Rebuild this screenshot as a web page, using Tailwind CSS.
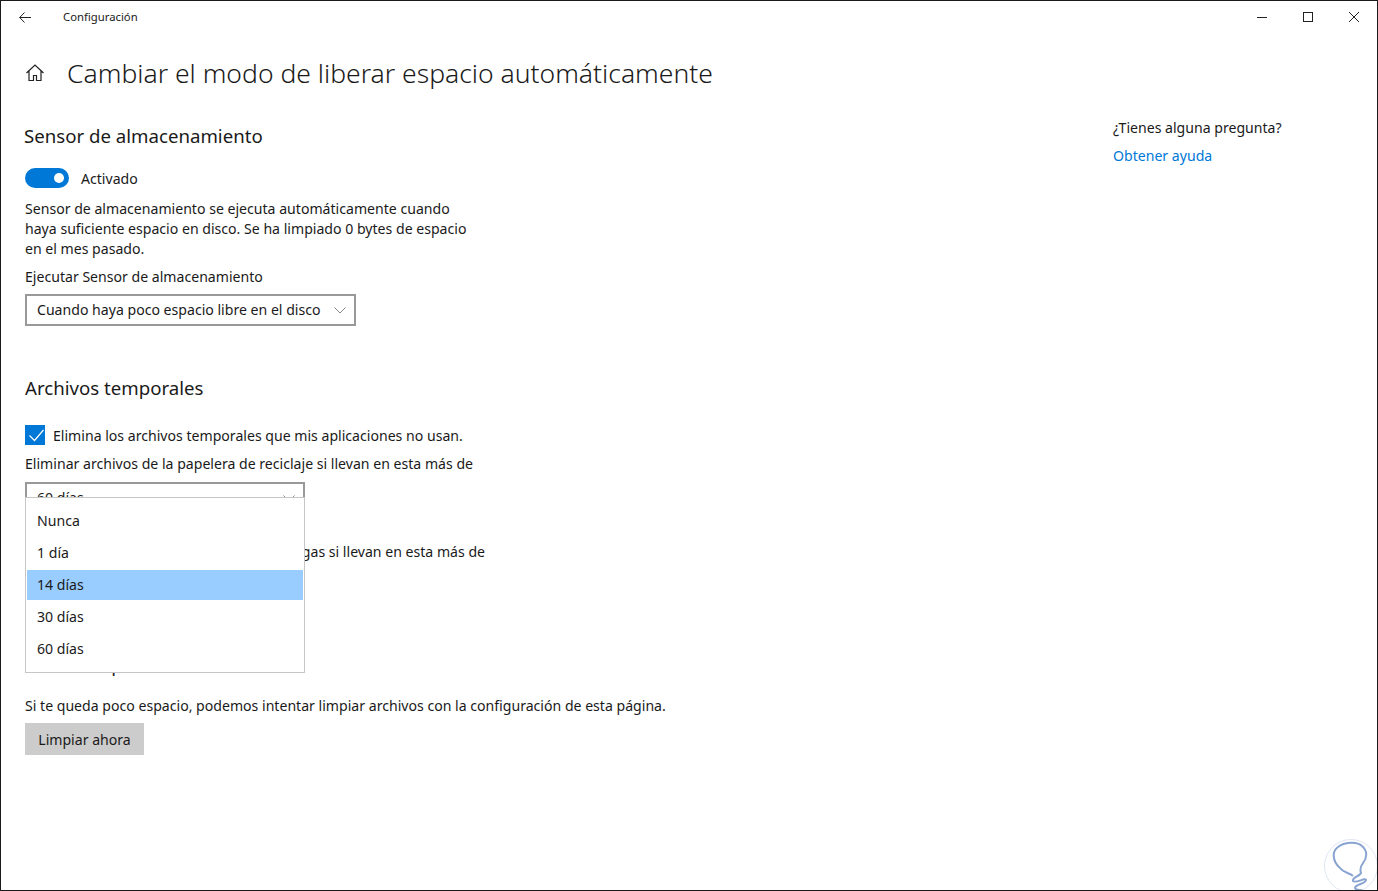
<!DOCTYPE html>
<html lang="es">

<head>
  <meta charset="UTF-8">
  <script src="https://cdn.jsdelivr.net/npm/@tailwindcss/browser@4"></script>
  <title>Configuración</title>
</head>

<body class="bg-white">
  <div class="relative w-[1378px] h-[891px] overflow-hidden border border-[#1a1a1a] bg-white text-[#1a1a1a] font-['Noto_Sans','Open_Sans',sans-serif] text-[14.1px]">

    <!-- title bar -->
    <div class="flex items-center h-[32px] pl-[18px]">
      <svg class="w-[12px] h-[11px]" viewBox="0 0 12 11" fill="none" stroke="#222" stroke-width="1"><path d="M12 5.500H.7M5.500.5 .7 5.500l4.800 5" /></svg>
      <span class="ml-[32px] text-[11.300px]">Configuración</span>
      <div class="ml-auto flex items-center pr-[18px] gap-[36px]">
        <svg class="w-[10px] h-[10px]" viewBox="0 0 10 10" stroke="#222"><path d="M0 5.500H10" /></svg>
        <svg class="w-[10px] h-[10px]" viewBox="0 0 10 10" fill="none" stroke="#222"><rect x=".5" y=".5" width="9" height="9" /></svg>
        <svg class="w-[10px] h-[10px]" viewBox="0 0 10 10" stroke="#222"><path d="M0 0l10 10M10 0 0 10" /></svg>
      </div>
    </div>

    <div class="flex justify-between">
      <main class="pl-[24px]">
        <div class="flex items-center h-[46px] mt-[17px]">
          <svg class="w-[20px] h-[20px]" viewBox="0 0 20 20" fill="none" stroke="#222" stroke-width="1.2"><path d="M1.500 10 10 2l8.500 8M4 8v9.500h4.500v-5h3v5H16V8" /></svg>
          <h1 class="ml-[22px] text-[26.500px] leading-[36px] font-light">Cambiar el modo de liberar espacio automáticamente</h1>
        </div>

        <h2 class="mt-[26px] text-[18.650px] leading-[28px] -ml-[1px]">Sensor de almacenamiento</h2>

        <div class="flex items-center mt-[18px] h-[20px]">
          <div class="flex items-center justify-end w-[44px] h-[20px] rounded-full bg-[#0078d7] pr-[5px]">
            <div class="w-[10px] h-[10px] rounded-full bg-white"></div>
          </div>
          <span class="ml-[12px] pt-[2px]">Activado</span>
        </div>

        <p class="mt-[11px] w-[450px] leading-[20px]">Sensor de almacenamiento se ejecuta automáticamente cuando haya suficiente espacio en disco. Se ha limpiado 0 bytes de espacio en el mes pasado.</p>

        <p class="mt-[8px] leading-[20px]">Ejecutar Sensor de almacenamiento</p>
        <div class="flex items-center justify-between mt-[7px] w-[331px] h-[32px] border-2 border-[#999] pl-[10px] pr-[8px]">
          <span>Cuando haya poco espacio libre en el disco</span>
          <svg class="w-[12px] h-[7px]" viewBox="0 0 12 7" fill="none" stroke="#888"><path d="M.5.5 6 6l5.500-5.500" /></svg>
        </div>

        <h2 class="mt-[48px] text-[18.650px] leading-[28px]">Archivos temporales</h2>

        <div class="flex items-center mt-[23px] h-[20px]">
          <div class="w-[20px] h-[20px] bg-[#0078d7]">
            <svg class="w-[20px] h-[20px]" viewBox="0 0 20 20" fill="none" stroke="#fff" stroke-width="1.200"><path d="M4.500 10.500l5 5 9-10.500" /></svg>
          </div>
          <span class="ml-[8px] pt-[2px]">Elimina los archivos temporales que mis aplicaciones no usan.</span>
        </div>

        <p class="mt-[9px] leading-[20px]">Eliminar archivos de la papelera de reciclaje si llevan en esta más de</p>
        <div class="flex items-center justify-between mt-[8px] w-[280px] h-[32px] border-2 border-[#999] pl-[10px] pr-[8px]">
          <span>60 días</span>
          <svg class="w-[12px] h-[7px]" viewBox="0 0 12 7" fill="none" stroke="#888"><path d="M.5.5 6 6l5.500-5.500" /></svg>
        </div>

        <p class="mt-[28px] leading-[20px]">Eliminar archivos de mi carpeta de Descargas si llevan en esta más de</p>
        <div class="flex items-center mt-[7px] w-[280px] h-[32px] border-2 border-[#999] pl-[10px]">
          <span>Nunca</span>
        </div>

        <h2 class="mt-[50px] text-[18.650px] leading-[28px]">Liberar espacio ahora</h2>

        <p class="mt-[17px] leading-[20px]">Si te queda poco espacio, podemos intentar limpiar archivos con la configuración de esta página.</p>
        <button class="block mt-[7px] w-[119px] h-[32px] pt-[2px] bg-[#cccccc] text-center">Limpiar ahora</button>
      </main>

      <aside class="w-[264px] mt-[85px]">
        <p class="leading-[20px]">¿Tienes alguna pregunta?</p>
        <a class="block mt-[8px] leading-[20px] text-[#0078d7]">Obtener ayuda</a>
      </aside>
    </div>

    <!-- open dropdown -->
    <div class="absolute left-[24px] top-[496px] w-[280px] h-[176px] border border-[#c6c6c6] bg-white py-[6px] px-px">
      <div class="flex items-center h-[32px] pt-[2px] pl-[10px]">Nunca</div>
      <div class="flex items-center h-[32px] pt-[2px] pl-[10px]">1 día</div>
      <div class="flex items-center h-[30px] mt-[2px] pl-[10px] bg-[#99ccff]">14 días</div>
      <div class="flex items-center h-[32px] pt-[2px] pl-[10px]">30 días</div>
      <div class="flex items-center h-[32px] pt-[2px] pl-[10px]">60 días</div>
    </div>

    <!-- watermark -->
    <svg class="absolute left-[1323px] top-[838px] w-[54px] h-[52px]" viewBox="0 0 54 52" fill="none">
      <circle cx="27" cy="27" r="26.500" stroke="#dfe6f3" stroke-width="1" />
      <path d="M29 37C26 34 20 34 16 29 8 22 8 12 14 8 20 3 33 2 38 7 44 12 43 19 39 24 36 28 36 31 37 34 35 38 28 38 29 42 31 45 42 38 42 41 42 45 31 45 31 49 32 52 37 50 39 52" stroke="#8aa4d2" stroke-width="2" />
    </svg>
  </div>
</body>

</html>
